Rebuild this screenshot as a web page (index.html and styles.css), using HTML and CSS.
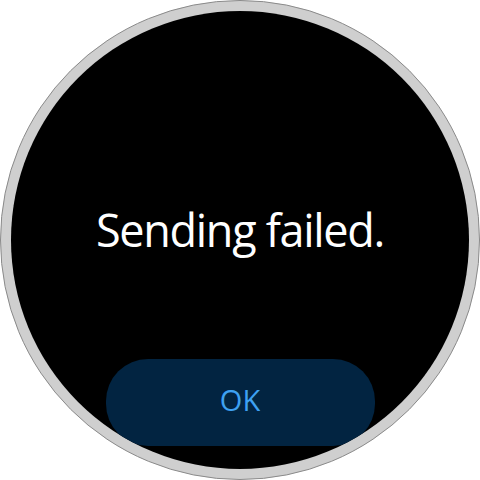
FILE: index.html
```html
<!DOCTYPE html>
<html>
<head>
<meta charset="utf-8">
<link rel="stylesheet" href="styles.css">
</head>
<body>
<div class="watch">
  <div class="screen">
    <div class="title">Sending failed.</div>
    <div class="btn">OK</div>
  </div>
</div>
</body>
</html>
```
FILE: styles.css
```css
html, body {
  margin: 0;
  padding: 0;
  background: #ffffff;
}
.watch {
  width: 480px;
  height: 480px;
  box-sizing: border-box;
  border-radius: 50%;
  background: #cfcfcf;
  border: 1px solid #8a8a8a;
  padding: 10px;
}
.screen {
  width: 100%;
  height: 100%;
  border-radius: 50%;
  background: #000000;
  overflow: hidden;
  display: flex;
  flex-direction: column;
  align-items: center;
  font-family: "Open Sans", Roboto, sans-serif;
}
.title {
  margin-top: 193px;
  color: #ffffff;
  font-size: 45px;
  font-weight: 500;
  line-height: 52px;
  letter-spacing: -1.3px;
}
.btn {
  margin-top: 103px;
  width: 269px;
  height: 87px;
  flex-shrink: 0;
  border-radius: 42px;
  background: #022441;
  color: #3ea1f2;
  font-size: 29px;
  font-weight: 500;
  display: flex;
  align-items: center;
  justify-content: center;
  padding-bottom: 6px;
  box-sizing: border-box;
}
```
